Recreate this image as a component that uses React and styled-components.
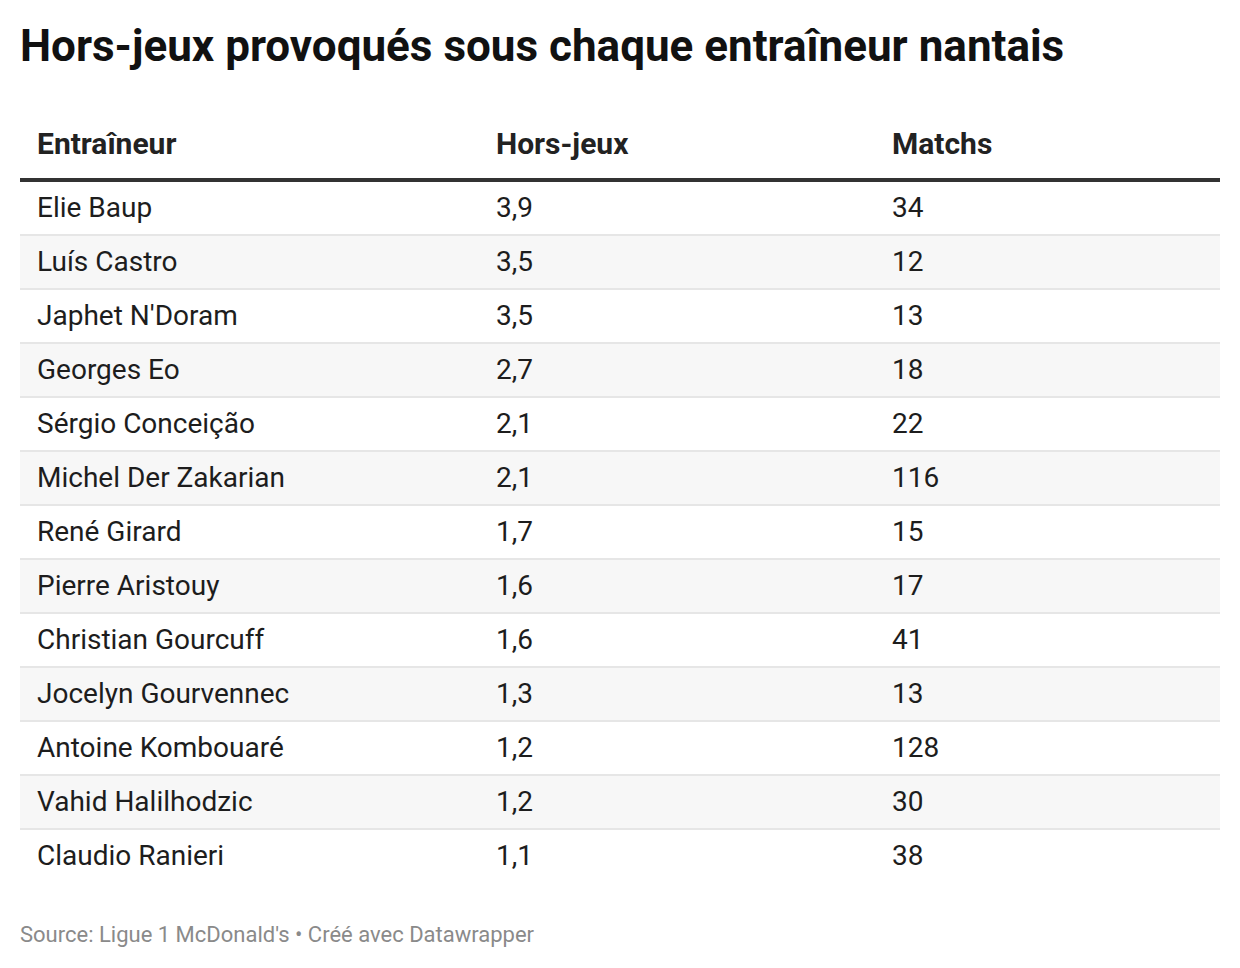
import React from 'react';
import styled, { createGlobalStyle } from 'styled-components';

const GlobalStyle = createGlobalStyle`
  body {
    margin: 0;
    background: #ffffff;
    font-family: Roboto, "Liberation Sans", sans-serif;
  }
`;

const rows = [
  ['Elie Baup', '3,9', '34'],
  ['Luís Castro', '3,5', '12'],
  ["Japhet N'Doram", '3,5', '13'],
  ['Georges Eo', '2,7', '18'],
  ['Sérgio Conceição', '2,1', '22'],
  ['Michel Der Zakarian', '2,1', '116'],
  ['René Girard', '1,7', '15'],
  ['Pierre Aristouy', '1,6', '17'],
  ['Christian Gourcuff', '1,6', '41'],
  ['Jocelyn Gourvennec', '1,3', '13'],
  ['Antoine Kombouaré', '1,2', '128'],
  ['Vahid Halilhodzic', '1,2', '30'],
  ['Claudio Ranieri', '1,1', '38'],
];

const Chart = styled.div`
  padding: 20px 20px 0 20px;
  width: 1200px;
`;

const Title = styled.h1`
  margin: 0;
  font-size: 44px;
  line-height: 52px;
  font-weight: 700;
  color: #111;
`;

const Table = styled.table`
  margin-top: 54px;
  width: 1200px;
  border-collapse: collapse;
  table-layout: fixed;
`;

const HeadCell = styled.th`
  box-sizing: border-box;
  width: ${(p) => p.w}px;
  text-align: left;
  font-size: 30px;
  font-weight: 700;
  color: #222;
  padding: 0 0 16px 17px;
  line-height: 36px;
  border-bottom: 4px solid #333;
`;

const Row = styled.tr`
  background: ${(p) => (p.shaded ? '#f7f7f7' : '#ffffff')};
  border-bottom: ${(p) => (p.last ? 'none' : '2px solid #e6e6e6')};
`;

const Cell = styled.td`
  box-sizing: border-box;
  font-size: 28px;
  color: #1d1d1d;
  padding: 0 0 0 17px;
  height: 52px;
  line-height: 52px;
  white-space: nowrap;
`;

const Footer = styled.div`
  margin-top: 40px;
  font-size: 22px;
  line-height: 26px;
  color: #8a8a8a;
`;

export default function App() {
  return (
    <>
      <GlobalStyle />
      <Chart>
        <Title>Hors-jeux provoqués sous chaque entraîneur nantais</Title>
        <Table>
          <thead>
            <tr>
              <HeadCell w={459}>Entraîneur</HeadCell>
              <HeadCell w={396}>Hors-jeux</HeadCell>
              <HeadCell w={345}>Matchs</HeadCell>
            </tr>
          </thead>
          <tbody>
            {rows.map((r, i) => (
              <Row key={r[0]} shaded={i % 2 === 1} last={i === rows.length - 1}>
                <Cell>{r[0]}</Cell>
                <Cell>{r[1]}</Cell>
                <Cell>{r[2]}</Cell>
              </Row>
            ))}
          </tbody>
        </Table>
        <Footer>Source: Ligue 1 McDonald's • Créé avec Datawrapper</Footer>
      </Chart>
    </>
  );
}
